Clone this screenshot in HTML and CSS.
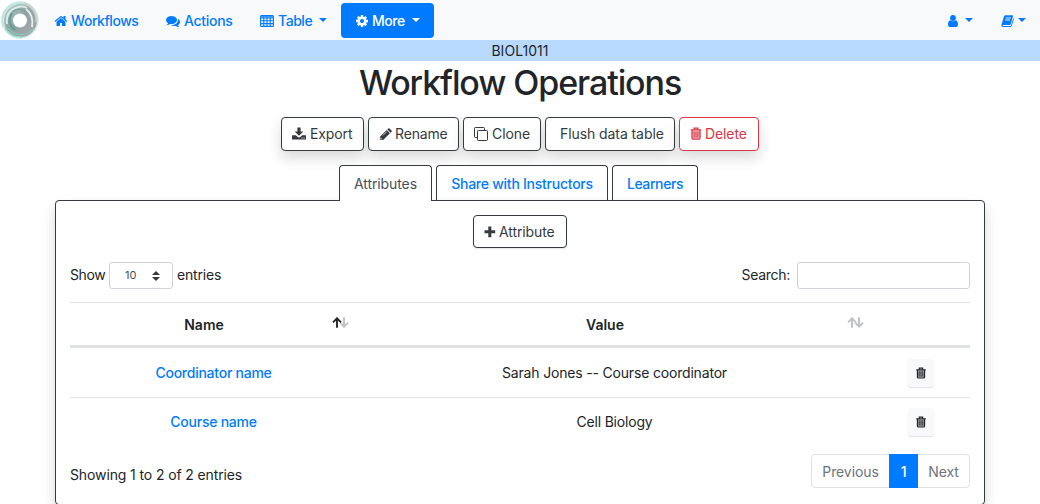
FILE: index.html
```html
<!DOCTYPE html>
<html lang="en">
<head>
<meta charset="utf-8">
<title>Workflow Operations</title>
<link rel="stylesheet" href="styles.css">
</head>
<body>
<svg class="defs" width="0" height="0">
  <symbol id="trash" viewBox="0 0 12 14"><path fill="currentColor" opacity=".5" d="M2 4h8v8.500H2z"/><path fill="none" stroke="currentColor" stroke-width="1.400" d="M.3 3.200h11.400M4 3V1.200h4V3M1.700 3.500v8.200q0 1.300 1.200 1.300h6.200q1.200 0 1.200-1.300V3.500"/><path stroke="currentColor" stroke-width=".8" d="M4 5.200v6M6 5.200v6M8 5.200v6"/></symbol>
  <symbol id="sort" viewBox="0 0 17 11"><path fill="none" stroke="#bfc1c3" stroke-width="1.900" d="M12 .2v9.300M8.200 5.700l3.900 3.900 3.900-3.900"/><path fill="none" stroke="currentColor" stroke-width="1.900" d="M5 10.800V1.500M1 5.300l4-4 4 4"/></symbol>
</svg>
<nav class="navbar">
  <svg class="logo" viewBox="0 0 40 40">
    <defs>
      <linearGradient id="ring" x1="0" y1="0" x2="1" y2="1"><stop offset="0" stop-color="#a9c4c1"/><stop offset=".45" stop-color="#8fa3a3"/><stop offset="1" stop-color="#a3a6ab"/></linearGradient>
    </defs>
    <rect width="40" height="40" fill="#fff"/>
    <circle cx="20" cy="20" r="18.300" fill="#e0efed" stroke="#d2ede8"/>
    <circle cx="20.500" cy="20.500" r="11" fill="none" stroke="url(#ring)" stroke-width="11"/>
    <path d="M3.500 27A17.500 17.500 0 0 1 26 4" fill="none" stroke="#bbe6de" stroke-width="1.800"/>
    <path d="M24 3.500A17 17 0 0 1 36.500 22" fill="none" stroke="#c9d2d2" stroke-width="2.400"/>
    <path d="M5 28Q11 38 23 37" fill="none" stroke="#99d6ca" stroke-width="1.500"/>
    <path d="M8 28Q14 36 25 34Q31 32 34 28" fill="none" stroke="#86cbbb" stroke-width="1.200"/>
    <path d="M7 24Q5 10 20 6.500Q24 6 27 8" fill="none" stroke="#dceae8" stroke-width="2"/>
    <path d="M26 9Q34 15 32 27" fill="none" stroke="#e8f2f1" stroke-width="1.800"/>
    <path d="M12 13Q6 23 15 30" fill="none" stroke="#659e94" stroke-width="2.200"/>
    <path d="M12 12Q18 7 26 11" fill="none" stroke="#79a59e" stroke-width="1.500"/>
    <circle cx="20" cy="20.500" r="7" fill="#fff"/>
  </svg>
  <a class="nav-link home"><svg viewBox="0 0 1792 1792"><path fill="currentColor" d="M1472 992v480q0 26-19 45t-45 19h-384v-384h-256v384h-384q-26 0-45-19t-19-45v-480q0-1 .5-3t.5-3l575-474 575 474q1 2 1 6zm223-69l-62 74q-8 9-21 11h-3q-13 0-21-7l-692-577-692 577q-12 8-24 7-13-2-21-11l-62-74q-8-10-7-23.500t11-21.500l719-599q32-26 76-26t76 26l244 204v-195q0-14 9-23t23-9h192q14 0 23 9t9 23v408l219 182q10 8 11 21.500t-7 23.500z"/></svg><span class="t">Workflows</span></a>
  <a class="nav-link actions"><svg viewBox="0 0 1792 1792"><path fill="currentColor" d="M1408 768q0 139-94 257t-256.500 186.500-353.500 68.500q-86 0-176-16-124 88-278 128-36 9-86 16h-3q-11 0-20.500-8t-11.500-21q-1-3-1-6.500t.5-6.500 2-6l2.500-5 3.500-5.500 4-5 4.500-5 4-4.500q5-6 23-25t26-29.500 22.500-29 25-38.500 20.500-44q-124-72-195-177t-71-224q0-139 94-257t256.500-186.500 353.500-68.500 353.500 68.500 256.500 186.500 94 257zm384 256q0 120-71 224.500t-195 176.500q10 24 20.500 44t25 38.500 22.500 29 26 29.500 23 25q1 1 4 4.500t4.500 5 4 5 3.500 5.500l2.500 5 2 6 .5 6.500-1 6.500q-3 14-13 22t-22 7q-50-7-86-16-154-40-278-128-90 16-176 16-271 0-472-132 58 4 88 4 161 0 309-45t264-129q125-92 192-212t67-254q0-77-23-152 129 71 204 178t75 230z"/></svg><span class="t">Actions</span></a>
  <a class="nav-link table-link"><svg viewBox="0 0 14 14"><path fill="none" stroke="currentColor" stroke-width="1.100" d="M1.600 1.500h10.800q1 0 1 1v8.900q0 1-1 1H1.600q-1 0-1-1V2.500q0-1 1-1zM.6 4h12.800M.6 6.800h12.800M.6 9.600h12.800M3.800 2v10M7 2v10M10.200 2v10"/><path fill="currentColor" d="M.6 1.500h12.800v2H.6z" opacity=".7"/></svg><span class="t">Table</span><i class="caret"></i></a>
  <a class="nav-link more"><svg viewBox="0 0 1792 1792"><path fill="currentColor" d="M1152 896q0-106-75-181t-181-75-181 75-75 181 75 181 181 75 181-75 75-181zm512-109v222q0 12-8 23t-20 13l-185 28q-19 54-39 91 35 50 107 138 10 12 10 25t-9 23q-27 37-99 108t-94 71q-12 0-26-9l-138-108q-44 23-91 38-16 136-29 186-7 28-36 28h-222q-14 0-24.500-8.500t-11.500-21.500l-28-184q-49-16-90-37l-141 107q-10 9-25 9-14 0-25-11-126-114-165-168-7-10-7-23 0-12 8-23 15-21 51-66.500t54-70.500q-27-50-41-99l-183-27q-13-2-21-12.500t-8-23.500v-222q0-12 8-23t19-13l186-28q14-46 39-92-40-57-107-138-10-12-10-24 0-10 9-23 26-36 98.500-107.500t94.500-71.500q13 0 26 10l138 107q44-23 91-38 16-136 29-186 7-28 36-28h222q14 0 24.500 8.500t11.500 21.500l28 184q49 16 90 37l142-107q9-9 24-9 13 0 25 10 129 119 165 170 7 8 7 22 0 12-8 23-15 21-51 66.500t-54 70.500q26 50 41 98l183 28q13 2 21 12.500t8 23.500z"/></svg><span class="t">More</span><i class="caret"></i></a>
  <a class="nav-link user"><svg viewBox="0 0 10 12"><path fill="currentColor" d="M2.300 5.200Q0 6 0 9.500q0 2.500 2 2.500h6q2 0 2-2.500 0-3.500-2.300-4.300Q6.500 6.300 5 6.300T2.300 5.200z"/><circle cx="5" cy="3" r="2.900" fill="currentColor"/></svg><i class="caret"></i></a>
  <a class="nav-link book"><svg viewBox="0 0 13 12"><path fill="currentColor" d="M4.600.3h6.700q1 0 .7 1L9.700 9.200q-.3.800-1.300.800H2.200q-.8 0-.6.700.1.400.8.400h6.900q.5 0 .7-.6l2.300-7.600q.8.500.5 1.300l-2.100 6.800q-.4 1-1.500 1H2Q.3 12 .3 10.200L2.900 1.700Q3.300.3 4.600.3z"/><path stroke="#f8f9fa" stroke-width=".9" d="M4.700 3h5M4.100 5h5"/></svg><i class="caret"></i></a>
</nav>
<div class="course"><span>BIOL1011</span></div>
<h1><span>Workflow Operations</span></h1>
<div class="operations">
  <button class="btn export"><svg viewBox="0 0 14 14"><path fill="currentColor" d="M5.400.5h3.200v4h2.800L7 8.800 2.600 4.500h2.800zM.5 8.300h3.400L5.500 9.800q1.500 1.200 3 0l1.600-1.500h3.400q.5 0 .5.600v3q0 .6-.6.6H.6q-.6 0-.6-.6v-3q0-.6.5-.6z"/><path fill="#fff" d="M9.500 10.500h1v1h-1zM11.600 10.500h1v1h-1z"/></svg><span class="t">Export</span></button>
  <button class="btn rename"><svg viewBox="0 0 14 14"><path fill="currentColor" d="M1 9.500L8.300 2.200l3.500 3.500L4.500 13H1zM9 1.500l1-1q.7-.6 1.300 0l2.200 2.200q.6.700 0 1.300l-1 1z"/><path stroke="#fff" stroke-width=".7" fill="none" d="M4.200 8l4-4M1.900 10.300v1.700h1.700"/></svg><span class="t">Rename</span></button>
  <button class="btn clone"><svg viewBox="0 0 14 14"><rect x="3.500" y="3.500" width="10" height="10" rx=".8" fill="none" stroke="currentColor"/><path fill="none" stroke="currentColor" d="M3.500 10.500H1.300q-.8 0-.8-.8V1.300q0-.8.8-.8h8.400q.8 0 .8.800v2.200"/></svg><span class="t">Clone</span></button>
  <button class="btn flush"><span class="t">Flush data table</span></button>
  <button class="btn delete"><svg viewBox="0 0 12 14"><use href="#trash"/></svg><span class="t">Delete</span></button>
</div>
<div class="tabs">
  <a class="tab active"><span>Attributes</span></a>
  <a class="tab share"><span>Share with Instructors</span></a>
  <a class="tab learners"><span>Learners</span></a>
</div>
<main class="panel">
  <div class="add-row"><button class="btn add"><svg viewBox="0 0 12 12"><path fill="currentColor" d="M4.300.5h3v3.800h3.900v3H7.300v3.900h-3V7.300H.5v-3h3.800z"/></svg><span class="t">Attribute</span></button></div>
  <div class="filters">
    <div class="length"><span class="show">Show</span><span class="select"><span>10</span><svg viewBox="0 0 8 10"><path fill="#343a40" d="M0 4l4-4 4 4zM0 6l4 4 4-4z"/></svg></span><span class="entries">entries</span></div>
    <label class="search"><span>Search:</span><input type="text"></label>
  </div>
  <div class="grid">
    <div class="row head"><b><span>Name</span><svg class="sort asc"><use href="#sort"/></svg></b><b><span>Value</span><svg class="sort"><use href="#sort"/></svg></b><i></i></div>
    <div class="row first"><a><span class="coord">Coordinator name</span></a><p><span class="sarah">Sarah Jones -- Course coordinator</span></p><button class="bin"><svg><use href="#trash"/></svg></button></div>
    <div class="row second"><a><span class="coursename">Course name</span></a><p><span class="cell">Cell Biology</span></p><button class="bin"><svg><use href="#trash"/></svg></button></div>
  </div>
  <div class="footer">
    <span class="info">Showing 1 to 2 of 2 entries</span>
    <div class="pager"><span class="prev">Previous</span><span class="current">1</span><span class="next">Next</span></div>
  </div>
</main>
</body>
</html>
```
FILE: styles.css
```css
* { box-sizing: border-box; }
body { margin: 0; height: 504px; overflow: hidden; background: #fff; color: #212529; font: 14px/21px Inter, "Liberation Sans", sans-serif; letter-spacing: -.18px; }
svg { display: block; flex: none; }
span { white-space: nowrap; }
.defs { position: absolute; }
.navbar { display: flex; align-items: center; height: 40px; background: #f8f9fa; color: #007bff; font-weight: 500; letter-spacing: -.45px; }
.logo { width: 40px; height: 40px; }
.nav-link { display: flex; align-items: center; height: 35px; padding-top: 1px; }
.nav-link svg { width: 14px; height: 14px; margin-right: 3px; }
.home { width: 98px; margin-left: 14px; }
.actions { width: 67px; margin-left: 14px; }
.actions .t { letter-spacing: -.3px; margin-left: 1px; }
.table-link { width: 67px; margin-left: 27px; }
.table-link .t { margin-left: 1px; }
.more { width: 93px; height: 35px; margin-left: 14px; padding: 1px 14px 0; border-radius: 4px; background: #007bff; color: #fff; }
.caret { width: 0; height: 0; margin: -2px 0 0 7px; border: 4px solid transparent; border-top-color: currentColor; border-bottom: 0; }
.user { margin-left: auto; }
.nav-link.user svg { width: 10px; height: 12px; margin: 1px 0 0; }
.book { margin: 0 14px 0 28px; }
.nav-link.book svg { width: 13px; height: 12px; margin: 0; }
.book .caret { margin-left: 4px; }
.course { height: 21px; background: #b8daff; text-align: center; line-height: 21px; letter-spacing: .05px; }
h1 { margin: 0; height: 42px; text-align: center; font-size: 34px; line-height: 43px; font-weight: 550; letter-spacing: -1.1px; }
.operations { display: flex; justify-content: center; gap: 4px; margin-top: 14px; }
.btn { display: flex; align-items: center; justify-content: flex-start; height: 34px; padding: 0 0 1px 10px; border: 1px solid #343a40; border-radius: 4px; background: #fff; color: #343a40; font: inherit; letter-spacing: -.1px; box-shadow: 0 7px 14px rgba(0,0,0,.15); }
.btn svg { width: 14px; height: 14px; margin-right: 4px; }
.export { width: 83px; } .rename { width: 91px; letter-spacing: -.15px; } .clone { width: 78px; }
.rename svg { width: 13px; height: 13px; margin: 1px 3px 0 0; }
.flush { width: 130px; padding-left: 14px; letter-spacing: -.08px; }
.btn.delete { width: 80px; border-color: #dc3545; color: #dc3545; }
.btn.delete svg { width: 12px; height: 13px; margin-right: 3px; }
.tabs { display: flex; gap: 4px; height: 36px; margin-top: 14px; padding-left: 339px; }
.tab { display: flex; justify-content: center; height: 35px; padding-top: 7px; border: 1px solid #343a40; border-bottom: 0; border-radius: 4px 4px 0 0; color: #007bff; font-weight: 500; background: #fff; letter-spacing: -.25px; }
.tab.active { position: relative; z-index: 2; width: 93px; height: 36px; color: #495057; font-weight: 400; letter-spacing: -.1px; }
.share { width: 172px; } .learners { width: 86px; }
.learners { letter-spacing: -.4px; }
.panel { position: relative; width: 930px; height: 305px; margin: -1px auto 0; padding: 14px 14px 0; border: 1px solid #343a40; border-radius: 4px; background: #fff; box-shadow: 0 7px 14px rgba(0,0,0,.15); }
.add-row { display: flex; justify-content: center; }
.btn.add { width: 94px; height: 33px; padding-bottom: 0; box-shadow: 0 1px 2px rgba(0,0,0,.1); }
.add svg { width: 12px; height: 12px; margin-right: 3px; }
.filters { display: flex; justify-content: space-between; height: 54px; padding-top: 14px; }
.length, .search { display: flex; align-items: center; height: 27px; }
.length > .show, .length > .entries { padding-bottom: 3px; }
.length > .show { width: 35px; letter-spacing: -.4px; }
.select { display: flex; align-items: center; width: 64px; height: 27px; margin: 0 4px; padding-left: 15px; border: 1px solid #ced4da; border-radius: 3px; font-size: 11px; color: #495057; letter-spacing: 0; }
.select svg { width: 8px; height: 10px; margin-left: 16px; }
.search > span { padding-bottom: 2px; letter-spacing: -.3px; }
.search input { width: 173px; height: 27px; margin: 0 0 0 7px; padding: 0; border: 1px solid #ced4da; border-radius: 3px; background: #fff; }
.row { display: grid; grid-template-columns: 287px 515px 98px; border-top: 1px solid #dee2e6; align-items: center; text-align: center; }
.row > b { position: relative; padding-right: 19px; font-weight: 600; letter-spacing: 0; }
.head { height: 46px; border-bottom: 3px solid #dee2e6; }
.head > b { padding-top: 1px; }
.sort { position: absolute; right: 8px; top: 4px; width: 17px; height: 11px; color: #bfc1c3; }
.asc { color: #212529; }
.row a { color: #007bff; font-weight: 500; letter-spacing: -.25px; }
.first { height: 49px; border-top: 0; padding-top: 1px; }
.row p { margin: 0; }
.first a, .first p { padding-bottom: 2px; }
.second { height: 49px; }
.second a, .second p { padding-bottom: 1px; }
.bin { display: grid; place-items: center; width: 26px; height: 28px; padding: 0; margin: 0 auto; border: 0; border-radius: 3px; color: #212529; background: #f8f9fa; box-shadow: 0 1px 1px rgba(0,0,0,.12); }
.bin svg { width: 10px; height: 12px; }
.footer { display: flex; align-items: center; justify-content: space-between; padding-top: 8px; }
.info { padding-top: 7px; letter-spacing: -.12px; }
.pager { display: flex; height: 34px; border: 1px solid #dee2e6; border-radius: 4px; color: #6c757d; letter-spacing: -.1px; }
.pager span { display: flex; align-items: center; justify-content: center; }
.pager .prev { width: 77px; }
.pager .current { width: 29px; margin: -1px 0; background: #007bff; color: #fff; font-weight: 500; }
.pager .next { width: 51px; }
```
